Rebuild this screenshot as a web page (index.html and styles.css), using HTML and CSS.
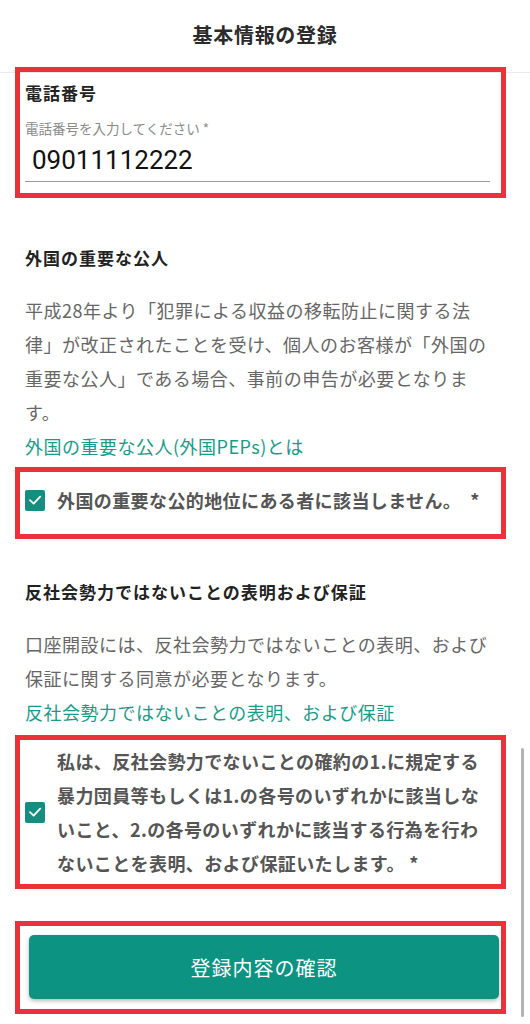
FILE: index.html
```html
<!DOCTYPE html>
<html lang="ja">
<head>
<meta charset="utf-8">
<title>基本情報の登録</title>
<link rel="stylesheet" href="styles.css">
</head>
<body>
<div class="page">
  <header class="topbar"><h1 class="title">基本情報の登録</h1></header>

  <div class="mark mark-phone">
    <div class="field">
      <div class="field-title">電話番号</div>
      <label class="field-label">電話番号を入力してください *</label>
      <div class="field-input">09011112222</div>
    </div>
  </div>

  <section class="section">
    <h2 class="sec-title">外国の重要な公人</h2>
    <p class="sec-text">平成28年より「犯罪による収益の移転防止に関する法律」が改正されたことを受け、個人のお客様が「外国の重要な公人」である場合、事前の申告が必要となります。</p>
    <a class="sec-link">外国の重要な公人(外国PEPs)とは</a>
  </section>

  <div class="mark mark-check1">
    <div class="check-row">
      <span class="checkbox"><svg viewBox="0 0 20 20" width="20" height="20"><path d="M5 10.2 L8.6 13.6 L15.2 6.6" fill="none" stroke="#fff" stroke-width="1.8" stroke-linecap="round" stroke-linejoin="round"/></svg></span>
      <span class="check-text">外国の重要な公的地位にある者に該当しません。 &nbsp;*</span>
    </div>
  </div>

  <section class="section section-2">
    <h2 class="sec-title">反社会勢力ではないことの表明および保証</h2>
    <p class="sec-text">口座開設には、反社会勢力ではないことの表明、および保証に関する同意が必要となります。</p>
    <a class="sec-link">反社会勢力ではないことの表明、および保証</a>
  </section>

  <div class="mark mark-check2">
    <div class="check-row">
      <span class="checkbox"><svg viewBox="0 0 20 20" width="20" height="20"><path d="M5 10.2 L8.6 13.6 L15.2 6.6" fill="none" stroke="#fff" stroke-width="1.8" stroke-linecap="round" stroke-linejoin="round"/></svg></span>
      <span class="check-text">私は、反社会勢力でないことの確約の1.に規定する暴力団員等もしくは1.の各号のいずれかに該当しないこと、2.の各号のいずれかに該当する行為を行わないことを表明、および保証いたします。 *</span>
    </div>
  </div>

  <div class="mark mark-button">
    <button class="submit">登録内容の確認</button>
  </div>

  <div class="scrollbar"></div>
</div>
</body>
</html>
```

FILE: styles.css
```css
* { box-sizing: border-box; }
html, body {
  margin: 0;
  padding: 0;
  background: #fff;
}
body {
  font-family: "Noto Sans CJK JP", "Noto Sans", sans-serif;
  color: #333;
}
.page {
  position: relative;
  width: 530px;
  height: 1024px;
  overflow: hidden;
}
.topbar {
  height: 73px;
  border-bottom: 1px solid #ebebeb;
  display: flex;
  justify-content: center;
  padding-top: 17px;
}
.title {
  margin: 0;
  font-size: 20px;
  line-height: 36px;
  font-weight: 700;
  letter-spacing: 0.7px;
  color: #2b2b2b;
}
.mark {
  margin-left: 15px;
  width: 491px;
  border: 5px solid #ea3238;
}
.mark-phone {
  margin-top: -6px;
  height: 131px;
  padding: 9px 11px 0 5px;
}
.field-title {
  font-size: 17px;
  line-height: 24px;
  font-weight: 700;
  letter-spacing: 1px;
  color: #222;
}
.field-label {
  display: block;
  margin-top: 15px;
  font-size: 13.5px;
  line-height: 17px;
  color: #8a8a8a;
}
.field-input {
  margin-top: 7px;
  padding: 0 0 4px 7px;
  font-family: Roboto, "Noto Sans", sans-serif;
  font-size: 26px;
  line-height: 33px;
  color: #111;
  border-bottom: 1px solid #9a9a9a;
}
.section {
  padding: 0 25px;
  margin-top: 43px;
}
.section-2 {
  margin-top: 36px;
}
.sec-title {
  margin: 0;
  font-size: 17px;
  line-height: 34px;
  font-weight: 700;
  letter-spacing: 1px;
  color: #222;
}
.sec-text {
  margin: 18px 0 0;
  font-size: 18px;
  letter-spacing: 0.5px;
  line-height: 34px;
  color: #666;
  width: 472px;
}
.sec-link {
  display: block;
  font-size: 18px;
  letter-spacing: 0.5px;
  line-height: 34px;
  color: #1a9a89;
  margin-bottom: 4px;
}
.section-2 .sec-link {
  margin-bottom: 6px;
}
.check-row {
  display: flex;
  align-items: center;
  gap: 12px;
}
.checkbox {
  flex: none;
  width: 20px;
  height: 21px;
  border-radius: 2px;
  background: #148f7f;
  display: flex;
  align-items: center;
  justify-content: center;
}
.check-text {
  font-size: 18px;
  letter-spacing: 0.4px;
  line-height: 34px;
  font-weight: 700;
  color: #555;
}
.mark-check1 {
  height: 72px;
  padding: 11px 8px 0 5px;
}
.mark-check2 {
  margin-top: 0;
  padding: 4px 8px 4px 5px;
  height: 154px;
}
.mark-button {
  margin-top: 32px;
  height: 93px;
  padding: 9px 2px 0 9px;
}
.submit {
  display: block;
  width: 100%;
  height: 64px;
  border: none;
  border-radius: 5px;
  background: #0c9382;
  color: #fff;
  font-family: "Noto Sans CJK JP", sans-serif;
  font-size: 20px;
  letter-spacing: 1px;
  box-shadow: 0 2px 4px rgba(0,0,0,0.28);
}
.scrollbar {
  position: absolute;
  left: 521px;
  top: 748px;
  width: 3px;
  height: 269px;
  border-radius: 2px;
  background: #b3b3b3;
}
```
